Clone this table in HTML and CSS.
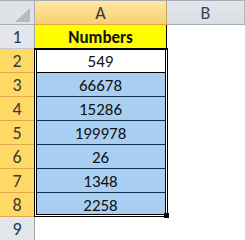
FILE: index.html
```html
<!DOCTYPE html>
<html>
<head>
<meta charset="utf-8">
<link rel="stylesheet" href="styles.css">
</head>
<body>
<div class="sheet">
  <div class="corner"><svg width="34" height="23" viewBox="0 0 34 23"><polygon points="30,7 30,21 15,21" fill="#b7bbc1"/></svg></div>
  <div class="colhead sel">A</div>
  <div class="colhead">B</div>

  <div class="rowhead">1</div><div class="cell title">Numbers</div><div class="blank"></div>
  <div class="rowhead sel">2</div><div class="cell data active">549</div><div class="blank"></div>
  <div class="rowhead sel">3</div><div class="cell data">66678</div><div class="blank"></div>
  <div class="rowhead sel">4</div><div class="cell data">15286</div><div class="blank"></div>
  <div class="rowhead sel">5</div><div class="cell data">199978</div><div class="blank"></div>
  <div class="rowhead sel">6</div><div class="cell data">26</div><div class="blank"></div>
  <div class="rowhead sel">7</div><div class="cell data">1348</div><div class="blank"></div>
  <div class="rowhead sel">8</div><div class="cell data">2258</div><div class="blank"></div>
  <div class="rowhead">9</div><div class="blank"></div><div class="blank"></div>

  <div class="selection"></div>
</div>
</body>
</html>
```

FILE: styles.css
```css
html, body {
  margin: 0;
  padding: 0;
  background: #ffffff;
}

.sheet {
  position: relative;
  display: grid;
  grid-template-columns: 35px 132px 78px;
  grid-template-rows: 25px repeat(9, 24px);
  width: 245px;
  height: 240px;
  overflow: hidden;
  font-family: "Carlito", "Lato", sans-serif;
  font-size: 17px;
}

.sheet > div {
  box-sizing: border-box;
  display: flex;
  align-items: center;
  justify-content: center;
  padding-top: 1px;
}

.corner {
  background: #dfe2e6;
  border-top: 1px solid #a9adb3;
  border-right: 1px solid #a9aeb4;
  border-bottom: 1px solid #a9aeb4;
}

.sheet > .corner {
  padding-top: 0;
}

.corner svg {
  display: block;
}

.colhead {
  background: linear-gradient(#e3e6ea, #dadee3);
  border-top: 1px solid #a9adb3;
  border-right: 1px solid #b3b7bd;
  border-bottom: 1px solid #a9aeb4;
  color: #37465c;
  font-size: 18px;
}

.colhead.sel {
  background: linear-gradient(#fde8a8, #f8ce70);
  border-bottom: 1px solid #eda33c;
  border-right: 1px solid #c9a45a;
  color: #3a3a3a;
}

.rowhead {
  background: #e3e6ea;
  border-right: 1px solid #9ea4ab;
  border-bottom: 1px solid #c2c6cb;
  color: #25385a;
  font-size: 18px;
}

.rowhead.sel {
  background: #ffd966;
  border-right: 1px solid #c2913f;
  border-bottom: 1px solid #e2a94c;
  color: #3a3a3a;
}

.cell {
  color: #111111;
}

.title {
  background: #ffff00;
  font-weight: bold;
  border-right: 1px solid #000000;
  border-bottom: 1px solid #000000;
}

.data {
  background: #a8cff1;
  border-right: 1px solid #000000;
  border-bottom: 1px solid #12304e;
}

.data.active {
  background: #ffffff;
  border-bottom: 1px solid #000000;
}

.blank {
  background: #ffffff;
}

.selection {
  position: absolute;
  left: 34px;
  top: 48px;
  width: 134px;
  height: 169px;
  box-sizing: border-box;
  border: 1px solid #000000;
  border-top-width: 2px;
  box-shadow:
    inset 1px 0 0 #ffffff,
    inset -1px 0 0 #ffffff,
    inset 0 -1px 0 #ffffff,
    inset 2px 0 0 #000000,
    inset -2px 0 0 #000000,
    inset 0 -2px 0 #000000;
}

.selection::after {
  content: "";
  position: absolute;
  right: -2px;
  bottom: -2px;
  width: 5px;
  height: 5px;
  background: #000000;
}
```
